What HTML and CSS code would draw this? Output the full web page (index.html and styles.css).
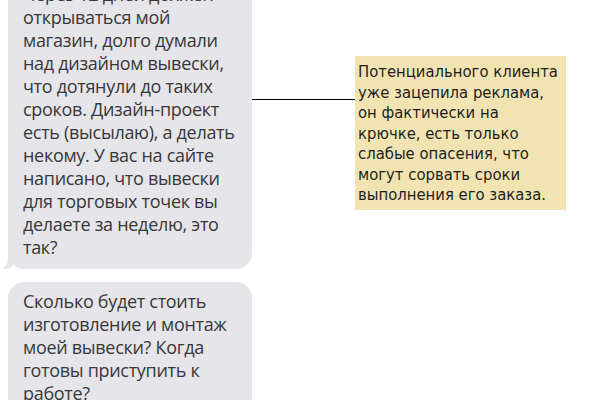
FILE: index.html
```html
<!DOCTYPE html>
<html lang="ru">
<head>
<meta charset="utf-8">
<link rel="stylesheet" href="styles.css">
</head>
<body>
<div class="page">
  <div class="chat">
    <div class="bubble bubble-first">Через 12 дней должен открываться мой магазин, долго думали над дизайном вывески, что дотянули до таких сроков. Дизайн-проект есть (высылаю), а делать некому. У вас на сайте написано, что вывески для торговых точек вы делаете за неделю, это так?</div>
    <div class="bubble bubble-second">Сколько будет стоить изготовление и монтаж моей вывески? Когда готовы приступить к работе?</div>
  </div>
  <div class="side">
    <div class="connector"></div>
    <div class="note">Потенциального клиента уже зацепила реклама, он фактически на крючке, есть только слабые опасения, что могут сорвать сроки выполнения его заказа.</div>
  </div>
</div>
</body>
</html>
```

FILE: styles.css
```css
html, body {
  margin: 0;
  padding: 0;
  background: #ffffff;
}
body {
  width: 600px;
  height: 400px;
  overflow: hidden;
}
.page {
  display: flex;
  align-items: flex-start;
  padding-left: 8px;
}
.chat {
  width: 244px;
  display: flex;
  flex-direction: column;
  gap: 13px;
  margin-top: -27px;
}
.bubble {
  position: relative;
  background: #e5e5ea;
  color: #383838;
  font-family: "Open Sans", sans-serif;
  font-size: 18px;
  letter-spacing: -0.3px;
  line-height: 23px;
  padding: 10px 8px 10px 15px;
  border-radius: 16px;
}
.bubble-first::before {
  content: "";
  position: absolute;
  left: -5px;
  bottom: 0;
  width: 14px;
  height: 16px;
  background: #e5e5ea;
  border-bottom-right-radius: 12px 14px;
}
.bubble-first::after {
  content: "";
  position: absolute;
  left: -12px;
  bottom: 0;
  width: 12px;
  height: 18px;
  background: #ffffff;
  border-bottom-right-radius: 8px 10px;
}
.bubble-second {
  padding-top: 8px;
}
.side {
  display: flex;
  align-items: flex-start;
  margin-top: 56px;
}
.connector {
  width: 103px;
  height: 1px;
  background: #000000;
  margin-top: 43px;
}
.note {
  width: 205px;
  background: #f2e4b2;
  color: #1e1e1e;
  font-family: "DejaVu Sans Condensed", "DejaVu Sans", sans-serif;
  font-size: 16.5px;
  line-height: 20.5px;
  padding: 6px 3px 4px 3px;
}
```
